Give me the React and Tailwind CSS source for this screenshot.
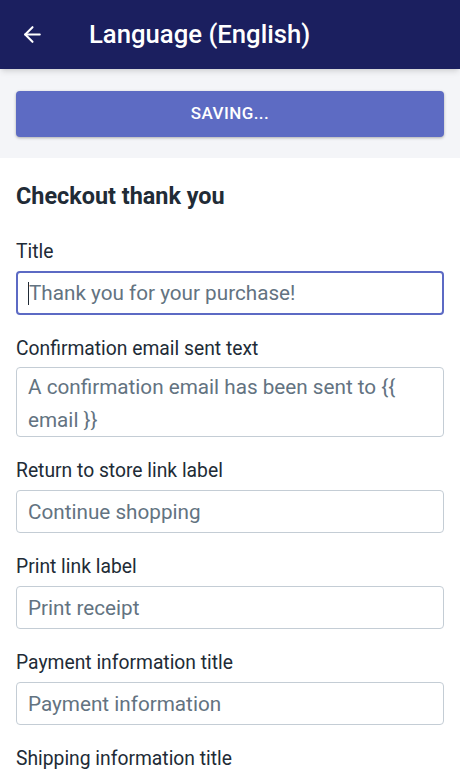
import React from 'react';
import { ArrowLeft } from 'lucide-react';

const fields = [
    { label: 'Return to store link label', placeholder: 'Continue shopping' },
    { label: 'Print link label', placeholder: 'Print receipt' },
    { label: 'Payment information title', placeholder: 'Payment information' },
    { label: 'Shipping information title', placeholder: 'Shipping information' },
];

const App = () => {
    return (
        <div className="w-[460px] h-[773px] overflow-hidden bg-white" style={{ fontFamily: 'Roboto, "Noto Sans", sans-serif' }}>
            {/* Header */}
            <div className="h-[69px] bg-[#1b1f5f] flex items-center px-[20px] shadow-md relative z-10">
                <ArrowLeft size={25} strokeWidth={2} className="text-white" />
                <h1 className="ml-[44px] text-white text-[25.7px] font-medium">Language (English)</h1>
            </div>

            {/* Save bar */}
            <div className="bg-[#f4f5f8] h-[89px] px-[16px] pt-[22px]">
                <button className="w-full h-[46px] rounded-[4px] bg-[#5d6bc3] text-white text-[17px] font-medium tracking-wide shadow-[0_1px_3px_rgba(0,0,0,0.3)]">
                    SAVING...
                </button>
            </div>

            {/* Form */}
            <div className="px-[16px] pt-[24px]">
                <h2 className="text-[23.4px] leading-[28px] font-bold text-[#212b36]">Checkout thank you</h2>

                <div className="mt-[30px]">
                    <label className="block text-[19.3px] leading-[24px] text-[#212b36]">Title</label>
                    <div className="relative mt-[7px]">
                        <input
                            className="w-full h-[44px] rounded-[4px] border-2 border-[#5c6ac4] px-[11px] text-[20.7px] placeholder-[#637381] outline-none"
                            placeholder="Thank you for your purchase!"
                        />
                        <span className="absolute left-[12px] top-[11px] w-[1px] h-[23px] bg-[#212b36]" />
                    </div>
                </div>

                <div className="mt-[22px]">
                    <label className="block text-[19.3px] leading-[24px] text-[#212b36]">Confirmation email sent text</label>
                    <textarea
                        className="mt-[6px] block w-full h-[70px] resize-none rounded-[4px] border border-[#c4cdd5] px-[11px] pt-[3px] text-[20.7px] leading-[33px] placeholder-[#637381] outline-none overflow-hidden"
                        placeholder="A confirmation email has been sent to {{ email }}"
                    />
                </div>

                {fields.map((f) => (
                    <div key={f.label} className="mt-[22px]">
                        <label className="block text-[19.3px] leading-[24px] text-[#212b36]">{f.label}</label>
                        <input
                            className="mt-[7px] w-full h-[43px] rounded-[4px] border border-[#c4cdd5] px-[11px] text-[20.7px] placeholder-[#637381] outline-none"
                            placeholder={f.placeholder}
                        />
                    </div>
                ))}
            </div>
        </div>
    );
};

export default App;
